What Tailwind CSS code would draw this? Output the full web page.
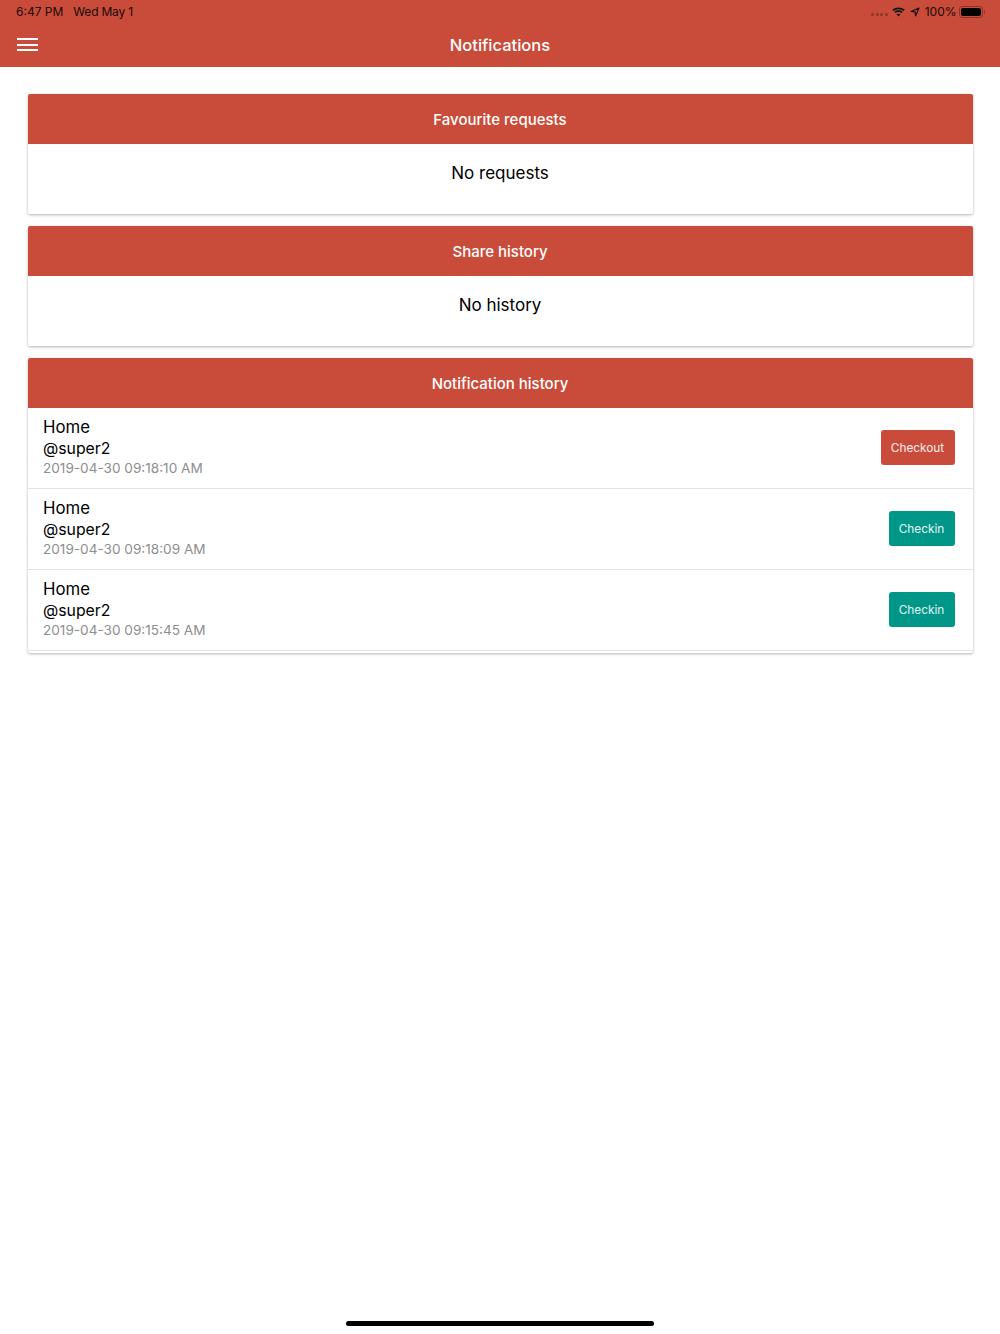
<!DOCTYPE html>
<html lang="en">
<head>
    <meta charset="UTF-8">
    <title>Notifications</title>
    <script src="https://cdn.jsdelivr.net/npm/@tailwindcss/browser@4"></script>
</head>
<body class="bg-white font-['Inter',sans-serif] text-black h-[1334px] relative overflow-hidden">
    <!-- Header -->
    <header class="bg-[#c94c3a] h-[67px] flex flex-col">
        <div class="h-[24px] pt-[0.5px] flex items-center justify-between pl-[16px] pr-[15px] text-[12px] text-[#1a0a08]">
            <div class="flex gap-[10px]">
                <span>6:47 PM</span>
                <span class="tracking-[-0.2px]">Wed May 1</span>
            </div>
            <div class="flex items-center">
                <div class="flex gap-[1.5px] mr-[4px] mt-[4px]">
                    <span class="w-[3px] h-[3px] rounded-full bg-[#8f3427]"></span>
                    <span class="w-[3px] h-[3px] rounded-full bg-[#8f3427]"></span>
                    <span class="w-[3px] h-[3px] rounded-full bg-[#8f3427]"></span>
                    <span class="w-[3px] h-[3px] rounded-full bg-[#8f3427]"></span>
                </div>
                <svg class="w-[13px] h-[10px] mr-[5px]" viewBox="0 0 15 11" fill="none" stroke="#111" stroke-width="2">
                    <path d="M1 3.6C4.6 .4 10.4 .4 14 3.6"/>
                    <path d="M3.4 6C5.6 4.1 9.4 4.1 11.6 6"/>
                    <path d="M7.5 10.8L5.2 8.2C6.6 7.2 8.4 7.2 9.8 8.2Z" fill="#111" stroke="none"/>
                </svg>
                <svg class="w-[10px] h-[10px] mr-[5px]" viewBox="0 0 11 11" fill="none" stroke="#111" stroke-width="1.2">
                    <path d="M10 1L1.2 4.9L5.6 5.4L6.1 9.8Z" stroke-linejoin="round"/>
                </svg>
                <span class="mr-[2px]">100%</span>
                <div class="w-[24px] h-[12px] rounded-[3px] border border-[#8f3427] p-[1px]">
                    <div class="w-full h-full rounded-[2px] bg-black"></div>
                </div>
                <span class="w-[1.5px] h-[4px] ml-[1px] rounded-r-sm bg-[#8f3427]"></span>
            </div>
        </div>
        <div class="flex-1 relative flex items-center justify-center">
            <button class="absolute left-[17px] top-[14px] w-[21px] flex flex-col gap-[3.5px]">
                <span class="h-[2px] bg-white"></span>
                <span class="h-[2px] bg-white"></span>
                <span class="h-[2px] bg-white"></span>
            </button>
            <h1 class="text-white text-[16.5px] font-medium pb-[1px]">Notifications</h1>
        </div>
    </header>

    <main class="pt-[27px] px-[27.5px] flex flex-col gap-[12px]">
        <!-- Favourite requests -->
        <section class="h-[120px] rounded-[2px] overflow-hidden bg-white shadow-[0_1px_3px_rgba(0,0,0,0.3)]">
            <h2 class="h-[50.4px] pt-[2px] bg-[#c94c3a] text-white text-[15px] font-medium flex items-center justify-center">Favourite requests</h2>
            <p class="text-[17px] text-center pt-[15.6px] leading-[26px]">No requests</p>
        </section>

        <!-- Share history -->
        <section class="h-[120px] rounded-[2px] overflow-hidden bg-white shadow-[0_1px_3px_rgba(0,0,0,0.3)]">
            <h2 class="h-[50.4px] pt-[2px] bg-[#c94c3a] text-white text-[15px] font-medium flex items-center justify-center">Share history</h2>
            <p class="text-[17px] text-center pt-[15.6px] leading-[26px]">No history</p>
        </section>

        <!-- Notification history -->
        <section class="rounded-[2px] overflow-hidden bg-white shadow-[0_1px_3px_rgba(0,0,0,0.3)] pb-[2px]">
            <h2 class="h-[50.4px] pt-[2px] bg-[#c94c3a] text-white text-[15px] font-medium flex items-center justify-center">Notification history</h2>
            <div class="h-[81px] pb-[2px] border-b border-[#e3e3e3] flex items-center justify-between pl-[15.5px] pr-[18px]">
                <div>
                    <p class="text-[16.8px] leading-[22px]">Home</p>
                    <p class="text-[15.8px] leading-[21px]">@super2</p>
                    <p class="text-[13.6px] leading-[19px] text-[#8e8e8e]">2019-04-30 09:18:10 AM</p>
                </div>
                <button class="w-[74px] h-[35px] pt-[2px] rounded-[3px] bg-[#c94c3a] text-white/90 text-[11.8px]">Checkout</button>
            </div>
            <div class="h-[81px] pb-[2px] border-b border-[#e3e3e3] flex items-center justify-between pl-[15.5px] pr-[18px]">
                <div>
                    <p class="text-[16.8px] leading-[22px]">Home</p>
                    <p class="text-[15.8px] leading-[21px]">@super2</p>
                    <p class="text-[13.6px] leading-[19px] text-[#8e8e8e]">2019-04-30 09:18:09 AM</p>
                </div>
                <button class="w-[66px] h-[35px] pt-[2px] rounded-[3px] bg-[#009688] text-white/90 text-[11.8px]">Checkin</button>
            </div>
            <div class="h-[81px] pb-[2px] border-b border-[#e3e3e3] flex items-center justify-between pl-[15.5px] pr-[18px]">
                <div>
                    <p class="text-[16.8px] leading-[22px]">Home</p>
                    <p class="text-[15.8px] leading-[21px]">@super2</p>
                    <p class="text-[13.6px] leading-[19px] text-[#8e8e8e]">2019-04-30 09:15:45 AM</p>
                </div>
                <button class="w-[66px] h-[35px] pt-[2px] rounded-[3px] bg-[#009688] text-white/90 text-[11.8px]">Checkin</button>
            </div>
        </section>
    </main>

    <!-- Home indicator -->
    <div class="absolute left-[346px] top-[1321px] w-[308px] h-[5px] rounded-full bg-black"></div>
</body>
</html>
